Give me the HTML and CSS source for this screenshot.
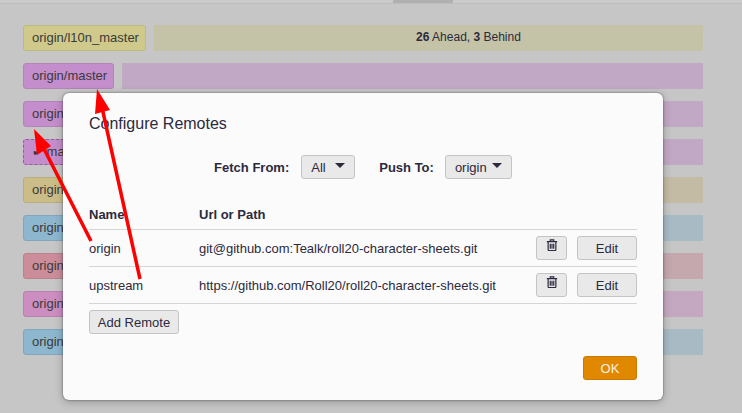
FILE: index.html
```html
<!DOCTYPE html>
<html lang="en">
<head>
<meta charset="utf-8">
<title>Configure Remotes</title>
<link rel="stylesheet" href="styles.css">
</head>
<body>
<div class="topbar"><div class="thumb"></div></div>
<main class="rows">
  <div class="row"><span class="label yellow">origin/l10n_master</span><div class="bar bar-yellow"><span><b>26</b> Ahead, <b>3</b> Behind</span></div></div>
  <div class="row"><span class="label purple">origin/master</span><div class="bar bar-purple"></div></div>
  <div class="row"><span class="label purple">origin/master</span><div class="bar bar-purple"></div></div>
  <div class="row"><span class="label purple current">✔ master</span><div class="bar bar-purple"></div></div>
  <div class="row"><span class="label tan">origin/master</span><div class="bar bar-tan"></div></div>
  <div class="row"><span class="label blue">origin/master</span><div class="bar bar-blue"></div></div>
  <div class="row"><span class="label red">origin/master</span><div class="bar bar-red"></div></div>
  <div class="row"><span class="label pink">origin/master</span><div class="bar bar-pink"></div></div>
  <div class="row"><span class="label blue">origin/master</span><div class="bar bar-blue"></div></div>
</main>
<section class="modal">
  <h2 class="title">Configure Remotes</h2>
  <div class="pickers">
    <label class="picker-label">Fetch From:</label>
    <button class="btn select select-fetch">All<i class="caret"></i></button>
    <label class="picker-label push">Push To:</label>
    <button class="btn select select-push">origin<i class="caret"></i></button>
  </div>
  <table class="remotes">
    <thead><tr><th class="col-name">Name</th><th>Url or Path</th><th></th></tr></thead>
    <tbody>
      <tr>
        <td>origin</td><td>git@github.com:Tealk/roll20-character-sheets.git</td>
        <td class="actions"><button class="btn trash"><svg class="trash-icon" viewBox="0 0 14 14"><path d="M5 2.500V1h4v1.500M1 3h12M2.500 3v9.500a1 1 0 0 0 1 1h7a1 1 0 0 0 1-1V3M5 5.500v6M7 5.500v6M9 5.500v6"/></svg></button><button class="btn edit">Edit</button></td>
      </tr>
      <tr>
        <td>upstream</td><td>https://github.com/Roll20/roll20-character-sheets.git</td>
        <td class="actions"><button class="btn trash"><svg class="trash-icon" viewBox="0 0 14 14"><path d="M5 2.500V1h4v1.500M1 3h12M2.500 3v9.500a1 1 0 0 0 1 1h7a1 1 0 0 0 1-1V3M5 5.500v6M7 5.500v6M9 5.500v6"/></svg></button><button class="btn edit">Edit</button></td>
      </tr>
    </tbody>
  </table>
  <button class="btn add">Add Remote</button>
  <div class="footer"><button class="btn ok">OK</button></div>
</section>
<svg class="arrows" viewBox="0 0 742 413">
  <path class="shaft" d="M140 279 101 103M91 241 41 143"/>
  <path class="head" d="M97 89 95 114 110 110ZM34 129 37 155 51 146Z"/>
</svg>
</body>
</html>
```
FILE: styles.css
```css
* { box-sizing: border-box; }
html, body { margin: 0; height: 100%; }
body {
  position: relative;
  width: 742px;
  height: 413px;
  overflow: hidden;
  background: #c6c6c6;
  color: #2c2a3d;
  font: 13px/1.2 "Liberation Sans", Arial, sans-serif;
}
.topbar { height: 4px; background: #cbcbcb; border-bottom: 1px solid #bebebe; padding-left: 393px; }
.thumb { width: 60px; height: 3px; background: #b0b0b0; }
.rows { padding: 21px 39px 0 23px; display: flex; flex-direction: column; gap: 12px; }
.row { display: flex; gap: 8px; height: 26px; }
.label { display: flex; align-items: center; padding: 0 6px 0 8px; border: 1px solid; border-radius: 3px; white-space: nowrap; color: #3a3a3a; }
.yellow { background: #cfca8b; border-color: #bdb97f; }
.purple { background: #c48dcc; border-color: #b383ba; }
.current { border-style: dashed; border-color: #8a6391; }
.tan { background: #cbbd88; border-color: #b9ad7d; }
.blue { background: #8db6cf; border-color: #81a6bc; }
.red { background: #cc8d9b; border-color: #ba818e; }
.pink { background: #cc8dc0; border-color: #ba81af; }
.bar { flex: 1; display: flex; align-items: center; justify-content: center; font-size: 12px; padding-bottom: 2px; }
.bar-yellow { background: #c4c3a7; padding-left: 80px; }
.bar-purple { background: #c1a8c4; }
.bar-tan { background: #c4bba5; }
.bar-blue { background: #a8bac4; }
.bar-red { background: #c4a8ad; }
.bar-pink { background: #c4a8c1; }
.modal {
  position: absolute;
  left: 63px;
  top: 93px;
  width: 600px;
  height: 307px;
  padding: 0 26px;
  background: #fbfbfb;
  border-radius: 6px;
  box-shadow: 0 0 2px rgba(0,0,0,.55), 0 2px 8px rgba(0,0,0,.25);
}
.title { margin: 0; padding-top: 21px; height: 50px; font-size: 16px; font-weight: 400; line-height: 20px; }
.pickers { display: flex; align-items: center; justify-content: center; margin-top: 12px; height: 24px; }
.picker-label { font-weight: 700; margin-right: 12px; padding-top: 2px; }
.push { margin-left: 24px; margin-right: 11px; }
.btn { font: inherit; color: inherit; background: #e9e9e9; border: 1px solid #c4c4c4; border-radius: 3px; padding: 2px 0 0; cursor: pointer; }
.select { display: flex; align-items: center; height: 24px; padding: 2px 9px 0; }
.select-fetch { width: 54px; }
.select-push { width: 67px; }
.caret { margin: -6px 0 0 auto; width: 0; height: 0; border: 5px solid transparent; border-top: 5px solid #2c2a3d; border-bottom: 0; }
.remotes { width: 100%; border-collapse: collapse; margin-top: 20px; }
.remotes th { text-align: left; font-weight: 700; height: 30px; padding: 2px 0 0; border-bottom: 1px solid #d5d5d5; }
.remotes td { height: 37px; padding: 2px 0 0; border-bottom: 1px solid #d5d5d5; }
.col-name { width: 110px; }
.actions { width: 101px; white-space: nowrap; }
.remotes td.actions { padding: 0; }
.btn.trash { display: inline-flex; align-items: flex-start; justify-content: center; width: 31px; height: 24px; padding-top: 2px; vertical-align: top; margin: 1px 10px 0 0; }
.trash-icon { width: 12px; height: 12px; fill: none; stroke: #2c2a3d; stroke-width: 1.400; }
.btn.edit { width: 60px; height: 24px; vertical-align: top; margin-top: 1px; }
.btn.add { display: block; width: 90px; height: 24px; margin-top: 6px; }
.footer { display: flex; justify-content: flex-end; margin-top: 22px; }
.btn.ok { width: 54px; height: 24px; background: #df8800; border-color: #c97a00; color: #fbf3e4; }
.arrows { position: absolute; inset: 0; width: 742px; height: 413px; pointer-events: none; }
.shaft { fill: none; stroke: #f00; stroke-width: 3.500; }
.head { fill: #f00; }
```
